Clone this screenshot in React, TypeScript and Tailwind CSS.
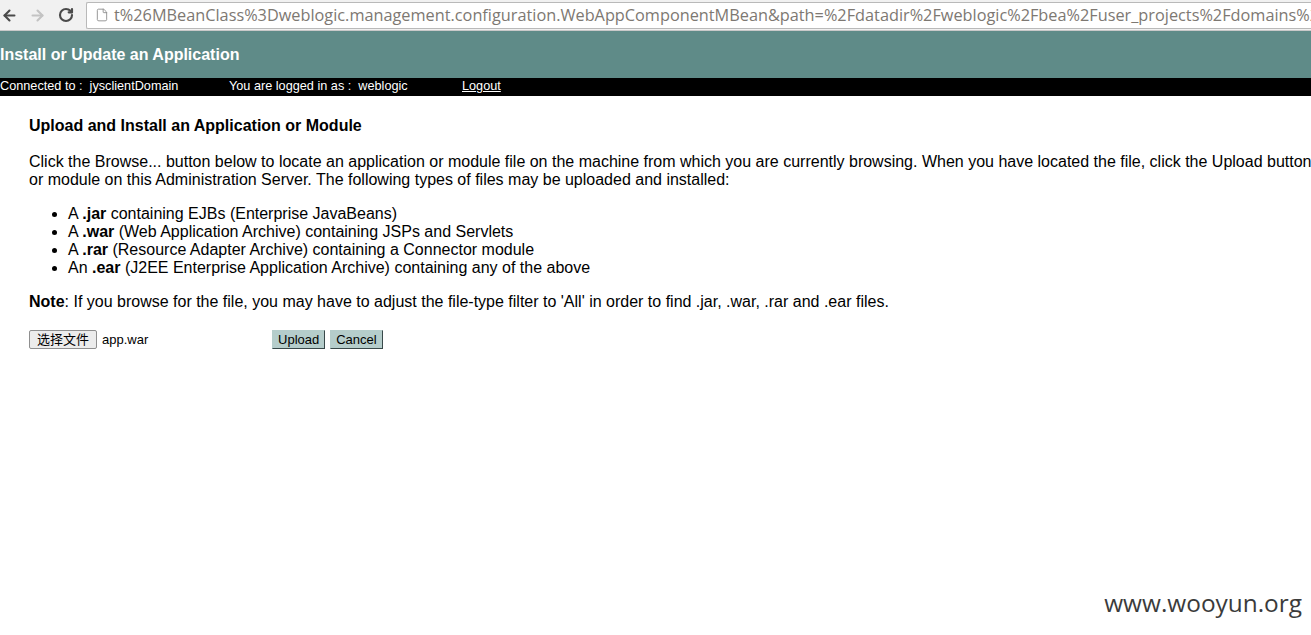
import { ArrowLeft, ArrowRight, RotateCw, File } from "lucide-react";

const items = [
  { pre: "A ", ext: ".jar", rest: " containing EJBs (Enterprise JavaBeans)" },
  { pre: "A ", ext: ".war", rest: " (Web Application Archive) containing JSPs and Servlets" },
  { pre: "A ", ext: ".rar", rest: " (Resource Adapter Archive) containing a Connector module" },
  { pre: "An ", ext: ".ear", rest: " (J2EE Enterprise Application Archive) containing any of the above" },
];

export default function App() {
  return (
    <div className="w-[1311px] h-[635px] overflow-hidden bg-white relative font-['Liberation_Sans',Arial,sans-serif] text-black">
      {/* browser toolbar */}
      <div className="h-[31px] flex items-center bg-[#f1f1f1] border-b border-[#c9c9c9]">
        <div className="w-[86px] flex items-center shrink-0">
          <ArrowLeft className="w-[17px] h-[17px] ml-[1px] text-[#4a4a4a]" strokeWidth={3} />
          <ArrowRight className="w-[17px] h-[17px] ml-[11px] text-[#c3c3c3]" strokeWidth={3} />
          <RotateCw className="w-[16px] h-[16px] ml-[12px] text-[#4a4a4a]" strokeWidth={3.2} />
        </div>
        <div className="flex-1 h-[27px] bg-white border border-[#b9b9b9] border-r-0 rounded-l-[2px] flex items-center overflow-hidden">
          <File className="w-[14px] h-[14px] ml-[8px] text-[#8a8a8a] shrink-0" strokeWidth={1.5} />
          <span className="ml-[5px] whitespace-nowrap text-[16.3px] text-[#7d7872] font-['Open_Sans',sans-serif]">
            t%26MBeanClass%3Dweblogic.management.configuration.WebAppComponentMBean&amp;path=%2Fdatadir%2Fweblogic%2Fbea%2Fuser_projects%2Fdomains%2F
          </span>
        </div>
      </div>

      {/* title bar */}
      <div className="h-[47px] bg-[#5f8b88] flex items-center">
        <h1 className="text-white font-bold text-[16px] leading-none">Install or Update an Application</h1>
      </div>

      {/* status bar */}
      <div className="h-[18px] bg-black text-white text-[12.7px] flex items-center whitespace-nowrap">
        <span className="w-[229px] shrink-0">Connected to :&nbsp; jysclientDomain</span>
        <span className="w-[233px] shrink-0">You are logged in as :&nbsp; weblogic</span>
        <a className="underline">Logout</a>
      </div>

      {/* content */}
      <div className="pl-[29px] pt-[21px]">
        <h2 className="font-bold text-[16px] leading-[18px]">Upload and Install an Application or Module</h2>
        <p className="mt-[18px] text-[16px] leading-[18px] whitespace-nowrap">
          Click the Browse... button below to locate an application or module file on the machine from which you are currently browsing. When you have located the file, click the Upload button to install the application
          <br />
          or module on this Administration Server. The following types of files may be uploaded and installed:
        </p>
        <ul className="mt-[16px] text-[16px] leading-[18px] list-disc pl-[39px]">
          {items.map((it) => (
            <li key={it.ext}>
              {it.pre}
              <b>{it.ext}</b>
              {it.rest}
            </li>
          ))}
        </ul>
        <p className="mt-[16px] text-[16px] leading-[18px] whitespace-nowrap">
          <b>Note</b>: If you browse for the file, you may have to adjust the file-type filter to 'All' in order to find .jar, .war, .rar and .ear files.
        </p>
        <div className="mt-[19px] flex items-center text-[13px]">
          <button className="h-[19px] px-[7px] bg-[#ececec] border border-[#8f8f8f] rounded-[2px] text-[13px] leading-none font-['Liberation_Sans','Noto_Sans_CJK_SC',sans-serif]">
            选择文件
          </button>
          <span className="ml-[5px] w-[170px]">app.war</span>
          <button className="h-[19px] px-[5px] bg-[#b5cdcb] border border-[#b5cdcb] border-r-[#39494a] border-b-[#39494a] text-[13px] leading-none">
            Upload
          </button>
          <button className="ml-[5px] h-[19px] px-[5px] bg-[#b5cdcb] border border-[#b5cdcb] border-r-[#39494a] border-b-[#39494a] text-[13px] leading-none">
            Cancel
          </button>
        </div>
      </div>

      {/* watermark */}
      <div className="absolute right-[9px] bottom-[13px] text-[24.4px] text-[#3b3b3b] font-['Open_Sans',sans-serif]">
        www.wooyun.org
      </div>
    </div>
  );
}
